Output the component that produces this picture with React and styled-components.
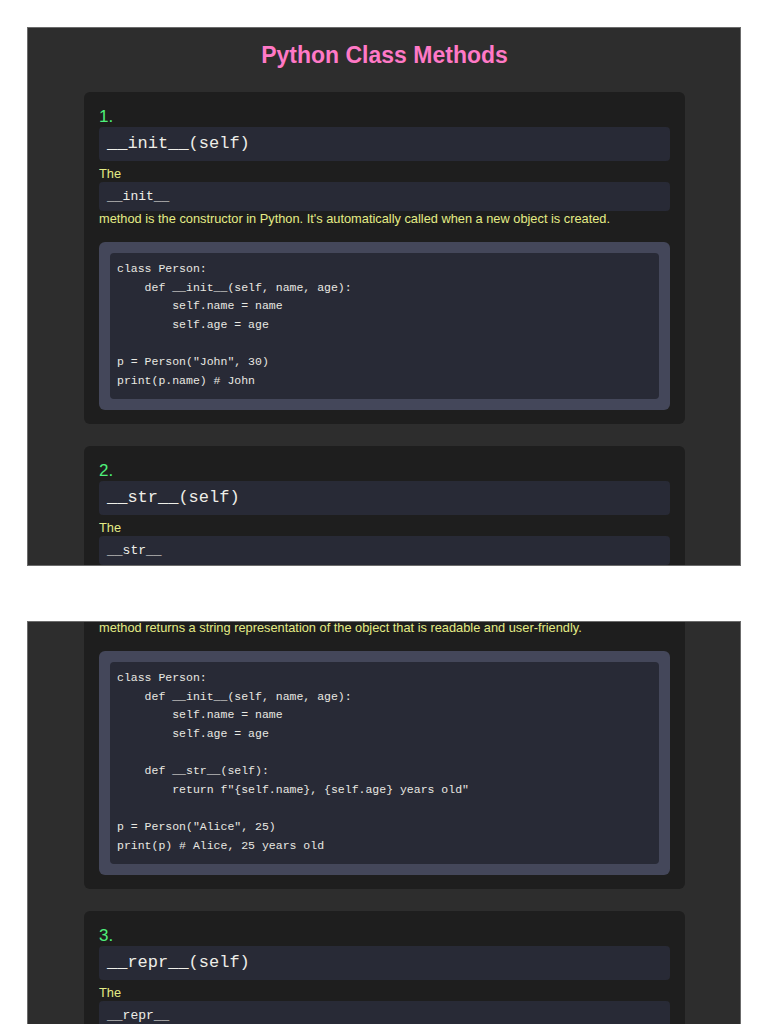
import React from "react";
import styled, { createGlobalStyle } from "styled-components";

const GlobalStyle = createGlobalStyle`
  html, body {
    margin: 0;
    padding: 0;
    background: #ffffff;
  }
  body {
    font-family: "Liberation Sans", Arial, sans-serif;
    padding: 27px;
  }
`;

const Sheets = styled.div`
  display: flex;
  flex-direction: column;
  gap: 55px;
`;

const Sheet = styled.section`
  box-sizing: border-box;
  height: 539px;
  overflow: hidden;
  background: #2d2d2d;
  border: 1px solid #6b6b6b;
  padding: ${(p) => (p.$continued ? "0 55px 0 56px" : "14px 55px 0 56px")};
`;

const Title = styled.h1`
  margin: 0 0 24px;
  text-align: center;
  color: #ff79c6;
  font-size: 23px;
  line-height: 26px;
  font-weight: bold;
`;

const Card = styled.article`
  background: #1e1e1e;
  border-radius: ${(p) => (p.$continued ? "0 0 6px 6px" : "6px")};
  padding: ${(p) => (p.$continued ? "0 15px 14px" : "15px 15px 14px")};
  margin-top: ${(p) => (p.$continued ? "-2px" : "0")};
  & + & {
    margin-top: 22px;
  }
`;

const Number = styled.div`
  color: #4ef07a;
  font-size: 17px;
  line-height: 20px;
`;

const mono = `"Liberation Mono", "Courier New", monospace`;

const MethodName = styled.div`
  background: #282a36;
  border-radius: 4px;
  padding: 7px 8px;
  font-family: ${mono};
  font-size: 17px;
  line-height: 20px;
  color: #eeeee8;
`;

const Text = styled.p`
  margin: ${(p) => (p.$continued ? "0" : "5px 0 0")};
  color: #e4ec86;
  font-size: 12.8px;
  line-height: 16px;
`;

const InlineCode = styled.code`
  display: block;
  background: #282a36;
  border-radius: 4px;
  padding: 6px 8px;
  font-family: ${mono};
  font-size: 13px;
  line-height: 17px;
  color: #eeeee8;
`;

const CodeFrame = styled.div`
  margin-top: 15px;
  background: #44475a;
  border-radius: 6px;
  padding: 11px;
`;

const CodeBlock = styled.pre`
  margin: 0;
  background: #282a36;
  border-radius: 4px;
  padding: 7px 7px 8px;
  font-family: ${mono};
  font-size: 11.5px;
  line-height: 18.65px;
  color: #e8e8e2;
  white-space: pre;
`;

const initCode = `class Person:
    def __init__(self, name, age):
        self.name = name
        self.age = age

p = Person("John", 30)
print(p.name) # John`;

const strCode = `class Person:
    def __init__(self, name, age):
        self.name = name
        self.age = age

    def __str__(self):
        return f"{self.name}, {self.age} years old"

p = Person("Alice", 25)
print(p) # Alice, 25 years old`;

function MethodHead({ n, name, word }) {
  return (
    <>
      <Number>{n}.</Number>
      <MethodName>{name}</MethodName>
      <Text>
        The
        <InlineCode>{word}</InlineCode>
      </Text>
    </>
  );
}

export default function App() {
  return (
    <>
      <GlobalStyle />
      <Sheets>
        <Sheet>
          <Title>Python Class Methods</Title>
          <Card>
            <MethodHead n={1} name="__init__(self)" word="__init__" />
            <Text $continued>
              method is the constructor in Python. It's automatically called when a new object is created.
            </Text>
            <CodeFrame>
              <CodeBlock>{initCode}</CodeBlock>
            </CodeFrame>
          </Card>
          <Card>
            <MethodHead n={2} name="__str__(self)" word="__str__" />
          </Card>
        </Sheet>
        <Sheet $continued>
          <Card $continued>
            <Text $continued>
              method returns a string representation of the object that is readable and user-friendly.
            </Text>
            <CodeFrame>
              <CodeBlock>{strCode}</CodeBlock>
            </CodeFrame>
          </Card>
          <Card>
            <MethodHead n={3} name="__repr__(self)" word="__repr__" />
          </Card>
        </Sheet>
      </Sheets>
    </>
  );
}
